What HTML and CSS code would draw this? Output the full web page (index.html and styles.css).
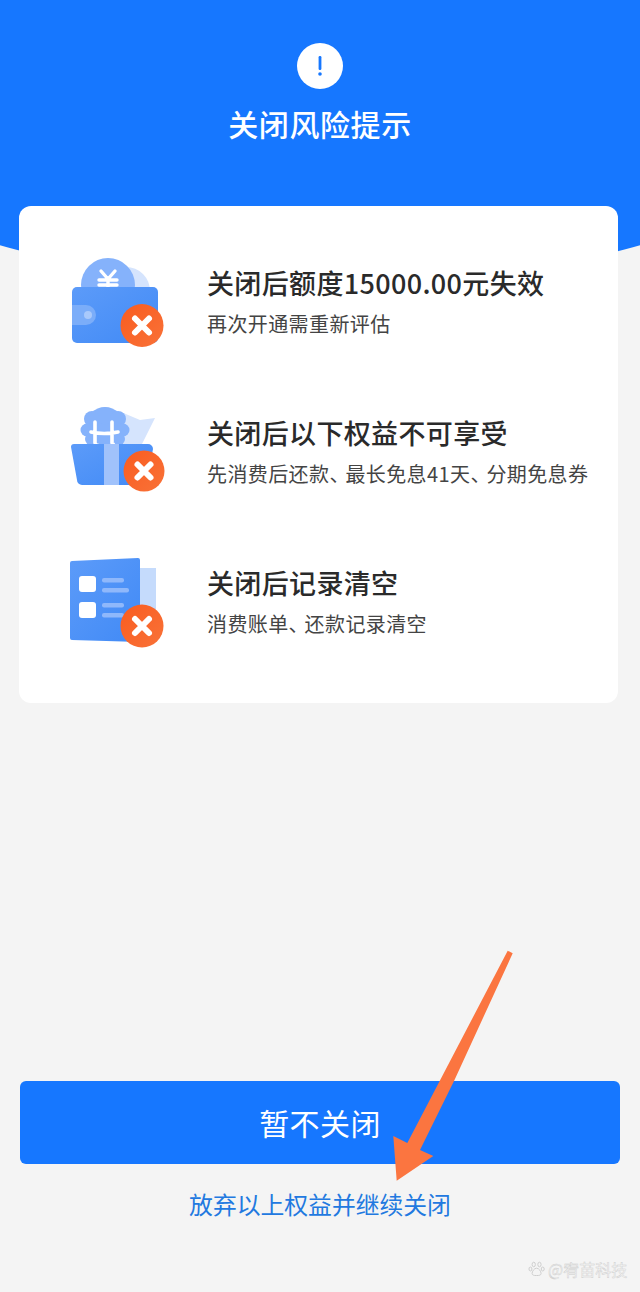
FILE: index.html
```html
<!DOCTYPE html>
<html lang="zh-CN">
<head>
  <meta charset="UTF-8" />
  <meta name="viewport" content="width=device-width, initial-scale=1" />
  <title>关闭风险提示</title>
  <link rel="stylesheet" href="styles.css">
</head>
<body>

<div class="page">
  <header class="hero">
    <div class="hero-icon">
      <svg width="46" height="46" viewBox="0 0 46 46">
        <rect x="21.6" y="13" width="2.8" height="14" rx="1.2" fill="#1677ff"/>
        <circle cx="23" cy="31" r="1.8" fill="#1677ff"/>
      </svg>
    </div>
    <h1 class="hero-title">关闭风险提示</h1>
  </header>

  <section class="card">
    <!-- 额度 -->
    <div class="risk-row">
      <svg class="risk-icon" width="130" height="120" viewBox="0 0 130 120">
        <defs>
          <linearGradient id="blueFill" x1="0" y1="0" x2="1" y2="1">
            <stop offset="0" stop-color="#5c9bf9"/>
            <stop offset="1" stop-color="#418af6"/>
          </linearGradient>
          <linearGradient id="orangeFill" x1="0" y1="0" x2="1" y2="1">
            <stop offset="0" stop-color="#f95c20"/>
            <stop offset="1" stop-color="#f97238"/>
          </linearGradient>
        </defs>
        <circle cx="76" cy="46" r="24" fill="#d5e4fd"/>
        <circle cx="58" cy="40" r="27" fill="#85b2fb"/>
        <path d="M51 26l7 8 7-8M49 35h18M49 40h18M58 34v8" fill="none" stroke="#fff" stroke-width="3.4" stroke-linecap="round"/>
        <rect x="22" y="42" width="86" height="56" rx="5" fill="url(#blueFill)"/>
        <path d="M22 60h14a10 10 0 0 1 0 20H22z" fill="#7badf9"/>
        <circle cx="38" cy="70" r="4" fill="#a9c9fb"/>
        <circle cx="92" cy="80.5" r="21.5" fill="url(#orangeFill)"/>
        <path d="M85 73.5l14 14M99 73.5l-14 14" stroke="#fff" stroke-width="6" stroke-linecap="round"/>
      </svg>
      <div class="risk-text">
        <div class="risk-title">关闭后额度15000.00元失效</div>
        <div class="risk-desc">再次开通需重新评估</div>
      </div>
    </div>

    <!-- 权益 -->
    <div class="risk-row">
      <svg class="risk-icon" width="130" height="120" viewBox="0 0 130 120">
        <path d="M71 17l19 8 15-2-13 26H71z" fill="#d5e4fd"/>
        <g fill="#85b2fb">
          <circle cx="55" cy="31" r="19"/>
          <circle cx="55" cy="21" r="8.5"/>
          <circle cx="42" cy="24" r="8"/>
          <circle cx="68" cy="24" r="8"/>
          <circle cx="37" cy="35" r="6.5"/>
          <circle cx="73" cy="35" r="6.5"/>
          <circle cx="41" cy="44" r="6"/>
          <circle cx="69" cy="44" r="6"/>
        </g>
        <path d="M45 27v21M62 27v21M41 37q13 3 27 0" fill="none" stroke="#fff" stroke-width="3.6" stroke-linecap="round"/>
        <path d="M24 49h74a5 5 0 0 1 5 5l-6 31a5 5 0 0 1-5 5H32a5 5 0 0 1-5-5l-6-33a3 3 0 0 1 3-3z" fill="url(#blueFill)"/>
        <rect x="54" y="49" width="15" height="41" fill="#a0c2fb"/>
        <circle cx="94" cy="76" r="20.5" fill="url(#orangeFill)"/>
        <path d="M87.500 69.500l13 13M100.500 69.500l-13 13" stroke="#fff" stroke-width="6" stroke-linecap="round"/>
      </svg>
      <div class="risk-text">
        <div class="risk-title">关闭后以下权益不可享受</div>
        <div class="risk-desc">先消费后还款<span class="dun">、</span>最长免息41天<span class="dun">、</span>分期免息券</div>
      </div>
    </div>

    <!-- 记录 -->
    <div class="risk-row">
      <svg class="risk-icon" width="130" height="120" viewBox="0 0 130 120">
        <rect x="88" y="23" width="18" height="58" fill="#c5dbfc"/>
        <path d="M22 16l66-3a2 2 0 0 1 2 2v82l-68-2a2 2 0 0 1-2-2V18a2 2 0 0 1 2-2z" fill="url(#blueFill)"/>
        <rect x="29" y="31" width="17" height="16" rx="3" fill="#fff"/>
        <rect x="29" y="57" width="17" height="16" rx="3" fill="#fff"/>
        <rect x="52" y="33" width="22" height="4.5" rx="2" fill="#8fb8fb"/>
        <rect x="52" y="43" width="27" height="4.5" rx="2" fill="#8fb8fb"/>
        <rect x="52" y="58" width="22" height="4.5" rx="2" fill="#8fb8fb"/>
        <rect x="52" y="68" width="22" height="4.5" rx="2" fill="#8fb8fb"/>
        <circle cx="92" cy="81" r="21.5" fill="url(#orangeFill)"/>
        <path d="M85 74l14 14M99 74L85 88" stroke="#fff" stroke-width="6" stroke-linecap="round"/>
      </svg>
      <div class="risk-text">
        <div class="risk-title">关闭后记录清空</div>
        <div class="risk-desc">消费账单<span class="dun">、</span>还款记录清空</div>
      </div>
    </div>
  </section>

  <div class="actions">
    <button class="btn-keep" type="button">暂不关闭</button>
    <a class="link-close" href="#">放弃以上权益并继续关闭</a>
  </div>

  <!-- 标注箭头 -->
  <svg class="arrow" width="640" height="1292" viewBox="0 0 640 1292">
    <path d="M507.7 950.7L512.7 953.3 454.500 1080 420 1150 433.3 1156 396.7 1180.7 393.3 1136 407.3 1143z" fill="#fb7540"/>
  </svg>

  <div class="watermark">
    <svg width="18" height="18" viewBox="0 0 22 20">
      <g fill="none" stroke="#cdcdcd" stroke-width="1.2">
        <ellipse cx="7" cy="4.5" rx="2" ry="2.8"/>
        <ellipse cx="14" cy="4.5" rx="2" ry="2.8"/>
        <ellipse cx="3" cy="10" rx="1.8" ry="2.4"/>
        <ellipse cx="18" cy="10" rx="1.8" ry="2.4"/>
        <path d="M10.5 9c3 0 5.5 4 5.5 6.5 0 2-2 2.500-5.500 2.500S5 17.500 5 15.500C5 13 7.500 9 10.500 9z"/>
      </g>
    </svg>
    <span>@宥苗科技</span>
  </div>
</div>

</body>
</html>
```

FILE: styles.css
```css
* {
  box-sizing: border-box;
}
body, html {
  margin: 0;
  padding: 0;
  background: #f4f4f4;
  font-family: "Noto Sans CJK SC", "Noto Sans", sans-serif;
}

.page {
  position: relative;
  height: 1292px;
  display: flex;
  flex-direction: column;
  overflow: hidden;
}

.hero {
  position: relative;
  height: 206px;
  padding-top: 43px;
  display: flex;
  flex-direction: column;
  align-items: center;
}
/* curved blue shape, runs on behind the card */
.hero::before {
  content: "";
  position: absolute;
  left: -160px;
  top: -27px;
  width: 960px;
  height: 312px;
  border-radius: 50%;
  background: #1677ff;
}
.hero::after {
  content: "";
  position: absolute;
  left: 0;
  top: 0;
  width: 100%;
  height: 129px;
  background: #1677ff;
}
.hero-icon {
  position: relative;
  z-index: 1;
  width: 46px;
  height: 46px;
  border-radius: 50%;
  background: white;
}
.hero-icon svg {
  display: block;
}
.hero-title {
  position: relative;
  z-index: 1;
  margin: 12px 0 0;
  color: white;
  font-size: 30px;
  letter-spacing: 0.6px;
  line-height: 44px;
  font-weight: 500;
}

.card {
  position: relative;
  margin: 0 22px 0 18.5px;
  padding: 39px 0 8px;
  background: white;
  border-radius: 12px;
}

.risk-row {
  display: flex;
  height: 150px;
  padding-left: 31.5px;
  gap: 27px;
}
.risk-icon {
  flex: none;
  display: block;
}
.risk-text {
  padding-top: 18px;
  white-space: nowrap;
}
.risk-title {
  font-size: 27px;
  letter-spacing: 0.35px;
  line-height: 40px;
  font-weight: 500;
  color: #2a2a2a;
}
.risk-desc {
  font-size: 20px;
  letter-spacing: 0.4px;
  line-height: 41px;
  color: #444;
}
/* the pause mark sits tight in the reference */
.dun {
  letter-spacing: -4px;
}

.actions {
  margin-top: auto;
  padding: 0 20px 46px;
  display: flex;
  flex-direction: column;
  align-items: center;
}
.btn-keep {
  width: 100%;
  height: 83px;
  padding: 0 0 2px;
  border: none;
  border-radius: 6px;
  background: #1677ff;
  color: white;
  font-family: inherit;
  font-size: 30px;
  letter-spacing: 0.4px;
}
.link-close {
  height: 82px;
  line-height: 80px;
  font-size: 23.8px;
  color: #2279e0;
  text-decoration: none;
}

.arrow {
  position: absolute;
  left: 0;
  top: 0;
  pointer-events: none;
}

.watermark {
  position: absolute;
  left: 528px;
  top: 1258px;
  display: flex;
  align-items: center;
  gap: 2px;
  font-size: 16px;
  line-height: 22px;
  color: #f4f4f4;
  -webkit-text-stroke: 0.4px #cccccc;
}
```
